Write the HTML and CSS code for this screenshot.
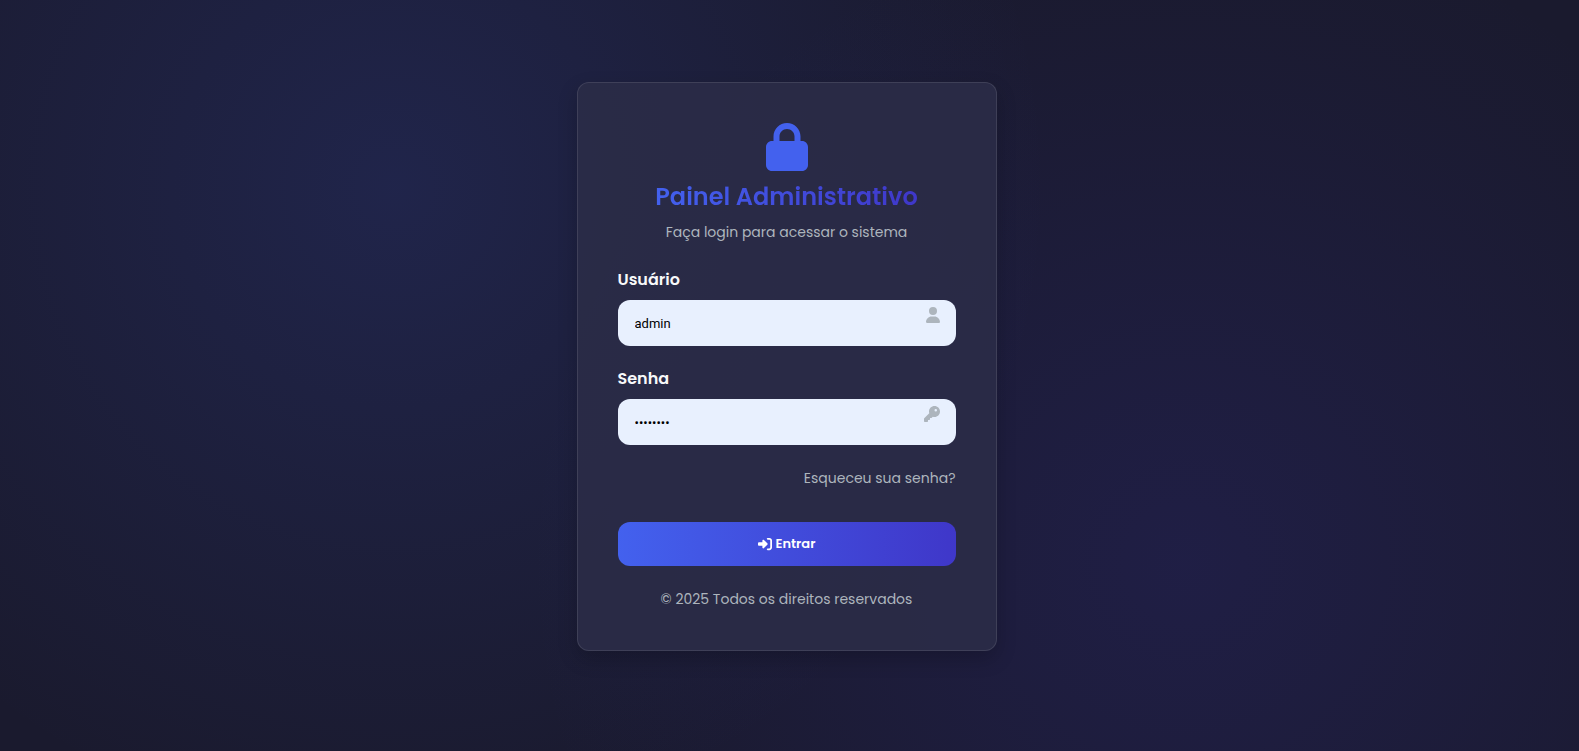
FILE: index.html
```html
<!DOCTYPE html>
<html lang="pt-BR">
<head>
    <meta charset="UTF-8">
    <meta name="viewport" content="width=device-width, initial-scale=1.0">
    <title>Painel Administrativo - Login</title>
    <link rel="stylesheet" href="styles.css">
</head>
<body>
    <main class="login-container">
        <div class="login-header">
            <svg class="login-icon" viewBox="0 0 448 512" aria-hidden="true"><path d="M144 144v48H304V144c0-44.200-35.800-80-80-80s-80 35.800-80 80zM80 192V144C80 64.500 144.500 0 224 0s144 64.500 144 144v48h16c35.300 0 64 28.700 64 64V448c0 35.300-28.700 64-64 64H64c-35.300 0-64-28.700-64-64V256c0-35.300 28.700-64 64-64H80z"/></svg>
            <h1 class="login-title">Painel Administrativo</h1>
            <p class="login-subtitle">Faça login para acessar o sistema</p>
        </div>

        <form id="login-form">
            <div class="form-group">
                <label for="username">Usuário</label>
                <div class="input-wrapper">
                    <input type="text" id="username" name="username" value="admin" required autocomplete="username">
                    <svg class="input-icon" viewBox="0 0 448 512" aria-hidden="true"><path d="M224 256A128 128 0 1 0 224 0a128 128 0 1 0 0 256zm-45.700 48C79.800 304 0 383.800 0 482.300C0 498.700 13.300 512 29.700 512H418.300c16.400 0 29.700-13.300 29.700-29.700C448 383.800 368.200 304 269.700 304H178.300z"/></svg>
                </div>
            </div>

            <div class="form-group">
                <label for="password">Senha</label>
                <div class="input-wrapper">
                    <input type="password" id="password" name="password" value="admin123" required autocomplete="current-password">
                    <svg class="input-icon" viewBox="0 0 512 512" aria-hidden="true"><path d="M336 352c97.200 0 176-78.800 176-176S433.200 0 336 0S160 78.800 160 176c0 18.700 2.900 36.800 8.300 53.700L7 391c-4.500 4.500-7 10.600-7 17v80c0 13.300 10.700 24 24 24h80c13.300 0 24-10.700 24-24V448h40c13.300 0 24-10.700 24-24V384h40c6.400 0 12.500-2.500 17-7l33.300-33.300c16.900 5.400 35 8.300 53.700 8.300zM376 96a40 40 0 1 1 0 80 40 40 0 1 1 0-80z"/></svg>
                </div>
            </div>

            <div class="forgot-password">
                <a href="#">Esqueceu sua senha?</a>
            </div>

            <button type="submit" class="login-btn">
                <svg class="btn-icon" viewBox="0 0 512 512" aria-hidden="true"><path d="M217.900 105.900L340.700 228.700c7.200 7.200 11.300 17.100 11.300 27.300s-4.100 20.100-11.300 27.300L217.900 406.100c-6.400 6.400-15 9.900-24 9.900c-18.700 0-33.900-15.200-33.900-33.900l0-62.100L32 320c-17.700 0-32-14.300-32-32l0-64c0-17.700 14.300-32 32-32l128 0 0-62.100c0-18.700 15.200-33.900 33.900-33.900c9 0 17.600 3.600 24 9.900zM352 416l64 0c17.700 0 32-14.300 32-32l0-256c0-17.700-14.300-32-32-32l-64 0c-17.700 0-32-14.300-32-32s14.300-32 32-32l64 0c53 0 96 43 96 96l0 256c0 53-43 96-96 96l-64 0c-17.700 0-32-14.300-32-32s14.300-32 32-32z"/></svg>
                <span>Entrar</span>
            </button>
        </form>

        <footer class="login-footer">© 2025 Todos os direitos reservados</footer>
    </main>
</body>
</html>
```
FILE: styles.css
```css
:root {
    --primary: #4361ee;
    --secondary: #3f37c9;
    --dark: #1a1a2e;
    --light: #f8f9fa;
    --gray: #adb5bd;
}

* {
    margin: 0;
    padding: 0;
    box-sizing: border-box;
}

body {
    font-family: Poppins, Inter, sans-serif;
    background-color: var(--dark);
    background-image:
        radial-gradient(circle at 25% 25%, rgba(67, 97, 238, 0.15) 0%, transparent 50%),
        radial-gradient(circle at 75% 75%, rgba(63, 55, 201, 0.15) 0%, transparent 50%);
    color: var(--light);
    min-height: 100vh;
    display: flex;
    align-items: center;
    justify-content: center;
    padding: 0 6px 18px 0;
}

.login-container {
    width: 100%;
    max-width: 420px;
    padding: 40px;
    background: rgba(43, 45, 72, 0.85);
    border: 1px solid rgba(255, 255, 255, 0.1);
    border-radius: 12px;
    box-shadow: 0 8px 20px rgba(0, 0, 0, 0.2);
}

.login-header {
    text-align: center;
    margin-bottom: 24px;
}

.login-icon {
    display: block;
    height: 48px;
    margin: 0 auto 8px;
    fill: var(--primary);
}

.login-title {
    width: fit-content;
    margin: 0 auto 6px;
    font-size: 24px;
    font-weight: 600;
    line-height: 36px;
    background: linear-gradient(to right, var(--primary), var(--secondary));
    -webkit-background-clip: text;
    background-clip: text;
    color: transparent;
}

.login-subtitle {
    color: var(--gray);
    font-size: 14px;
    line-height: 22px;
}

.form-group {
    margin-bottom: 20px;
}

.form-group label {
    display: block;
    margin-bottom: 8px;
    font-size: 16px;
    font-weight: 600;
    line-height: 25px;
}

.input-wrapper {
    position: relative;
}

.form-group input {
    display: block;
    width: 100%;
    height: 46px;
    padding: 0 44px 0 17px;
    border: none;
    border-radius: 12px;
    background: #e8f0fe;
    color: #000;
    font-family: Roboto, sans-serif;
    font-size: 13px;
    outline: none;
}

.form-group input:focus {
    box-shadow: 0 0 0 3px rgba(67, 97, 238, 0.3);
}

.input-icon {
    position: absolute;
    top: 7px;
    right: 16px;
    height: 16px;
    fill: var(--gray);
}

.forgot-password {
    margin-bottom: 31px;
    text-align: right;
    font-size: 14px;
    line-height: 26px;
}

.forgot-password a {
    color: var(--gray);
    text-decoration: none;
}

.forgot-password a:hover {
    color: var(--primary);
}

.login-btn {
    display: flex;
    align-items: center;
    justify-content: center;
    gap: 4px;
    width: 100%;
    height: 44px;
    border: none;
    border-radius: 12px;
    background: linear-gradient(to right, var(--primary), var(--secondary));
    color: white;
    font-family: inherit;
    font-size: 13px;
    font-weight: 600;
    cursor: pointer;
}

.btn-icon {
    height: 14px;
    fill: currentColor;
}

.login-footer {
    margin-top: 22px;
    text-align: center;
    color: var(--gray);
    font-size: 14px;
    line-height: 22px;
}
```
